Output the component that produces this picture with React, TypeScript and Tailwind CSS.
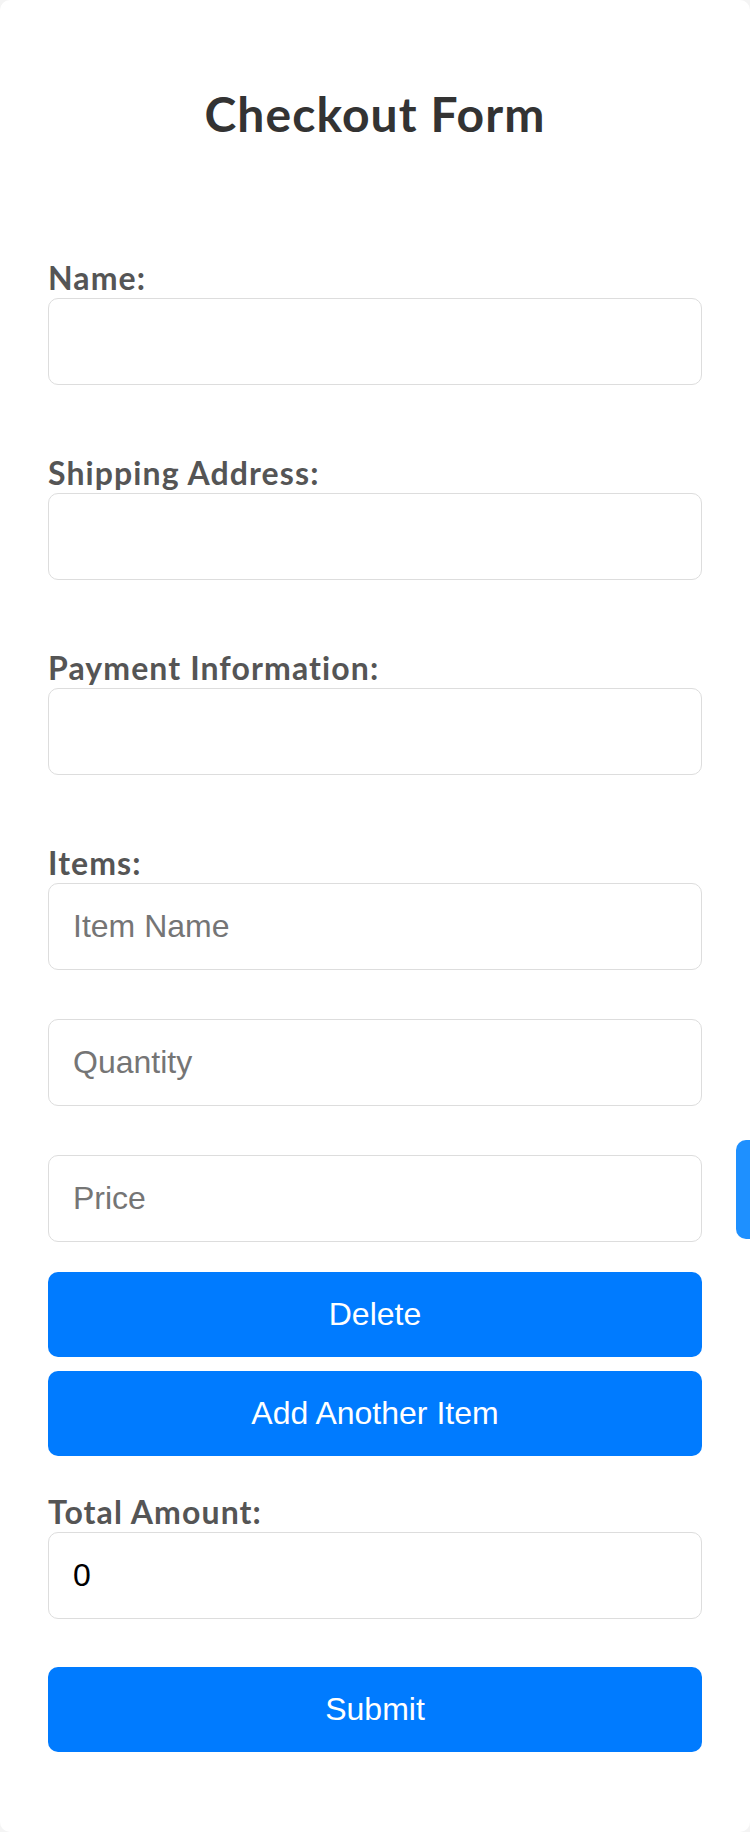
import { useState } from 'react'

type Item = { name: string; quantity: string; price: string }

const labelCls =
  "block text-[32px] leading-[40px] tracking-[1.1px] font-bold text-[#555] font-['Lato','Open_Sans',sans-serif]"
const inputCls =
  "block w-full h-[87px] px-6 border border-[#ddd] rounded-[10px] bg-white text-[32px] leading-[37px] text-black placeholder:text-[#757575] font-['Liberation_Sans',Arial,sans-serif] outline-none"
const buttonCls =
  "block w-full h-[85px] rounded-[10px] bg-[#007bff] text-white text-[32px] leading-[37px] font-['Liberation_Sans',Arial,sans-serif] cursor-pointer"

export default function App() {
  const [items, setItems] = useState<Item[]>([{ name: '', quantity: '', price: '' }])

  const total = items.reduce((sum, it) => sum + (Number(it.quantity) || 0) * (Number(it.price) || 0), 0)

  const update = (i: number, key: keyof Item, value: string) => {
    setItems(items.map((it, idx) => (idx === i ? { ...it, [key]: value } : it)))
  }

  return (
    <div className="relative min-h-[1832px] bg-[#f4f4f4]">
      <div className="bg-white rounded-[10px] px-12 pt-[86px] pb-[80px]">
        <h1 className="text-center text-[48px] leading-[56px] tracking-[1.1px] font-bold text-[#333] font-['Lato','Open_Sans',sans-serif]">
          Checkout Form
        </h1>

        <form className="mt-[116px]" onSubmit={(e) => e.preventDefault()}>
          <div className="mb-[68px]">
            <label htmlFor="name" className={labelCls}>Name:</label>
            <input id="name" type="text" className={inputCls} />
          </div>

          <div className="mb-[68px]">
            <label htmlFor="address" className={labelCls}>Shipping Address:</label>
            <input id="address" type="text" className={inputCls} />
          </div>

          <div className="mb-[68px]">
            <label htmlFor="payment" className={labelCls}>Payment Information:</label>
            <input id="payment" type="text" className={inputCls} />
          </div>

          <div>
            <label className={labelCls}>Items:</label>
            {items.map((it, i) => (
              <div key={i}>
                <input
                  type="text"
                  placeholder="Item Name"
                  value={it.name}
                  onChange={(e) => update(i, 'name', e.target.value)}
                  className={inputCls}
                />
                <input
                  type="number"
                  placeholder="Quantity"
                  value={it.quantity}
                  onChange={(e) => update(i, 'quantity', e.target.value)}
                  className={`${inputCls} mt-[49px]`}
                />
                <input
                  type="number"
                  placeholder="Price"
                  value={it.price}
                  onChange={(e) => update(i, 'price', e.target.value)}
                  className={`${inputCls} mt-[49px]`}
                />
                <button
                  type="button"
                  onClick={() => setItems(items.filter((_, idx) => idx !== i))}
                  className={`${buttonCls} mt-[30px]`}
                >
                  Delete
                </button>
              </div>
            ))}
            <button
              type="button"
              onClick={() => setItems([...items, { name: '', quantity: '', price: '' }])}
              className={`${buttonCls} mt-[14px]`}
            >
              Add Another Item
            </button>
          </div>

          <div className="mt-[36px]">
            <label htmlFor="total" className={labelCls}>Total Amount:</label>
            <input id="total" type="text" readOnly value={total} className={inputCls} />
          </div>

          <button type="submit" className={`${buttonCls} mt-[48px]`}>
            Submit
          </button>
        </form>
      </div>

      <div className="absolute right-0 top-[1140px] w-[14px] h-[99px] rounded-l-[10px] bg-[#1e90ff]" />
    </div>
  )
}
